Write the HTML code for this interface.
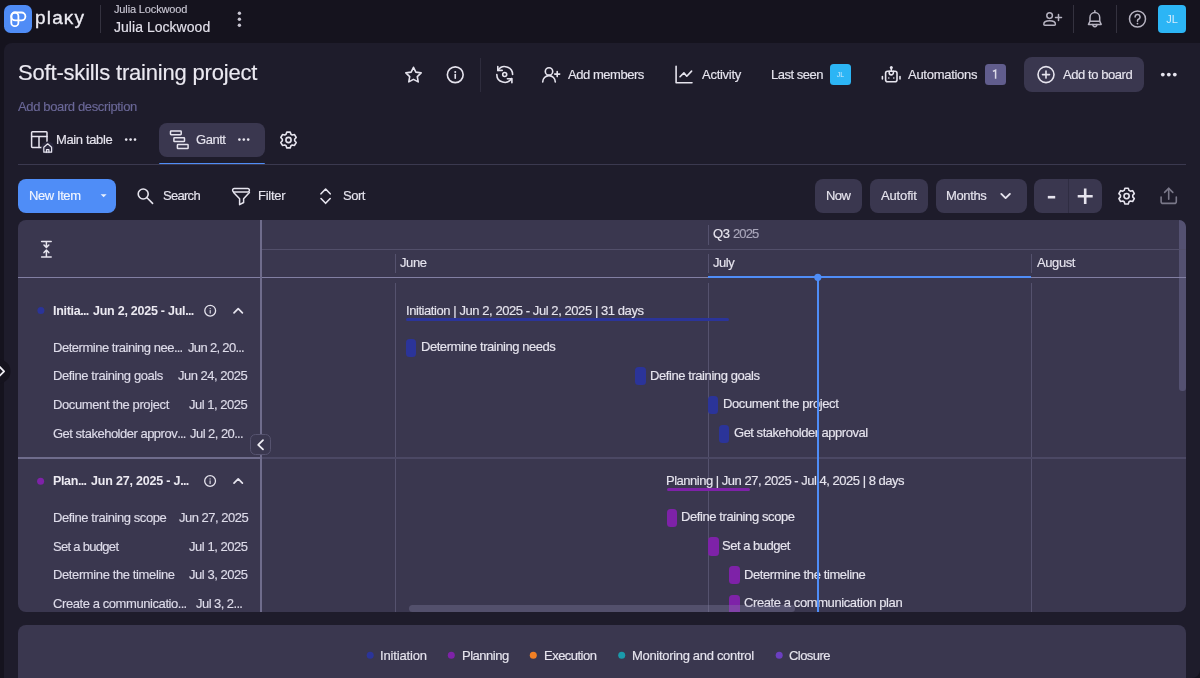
<!DOCTYPE html>
<html><head><meta charset="utf-8"><style>
html,body{margin:0;padding:0;width:1200px;height:678px;overflow:hidden;background:#15131e;}
body{position:relative;font-family:"Liberation Sans",sans-serif;}
div,svg{position:absolute;}
.t{white-space:nowrap;will-change:transform;-webkit-text-stroke:0.15px currentColor;}
</style></head><body>
<div style="left:0px;top:0px;width:1200px;height:678px;background:#15131e;border-radius:0px;"></div>
<div style="left:4.4px;top:5.1px;width:27.7px;height:27.7px;background:#4f8cf6;border-radius:6.5px;"></div>
<div class="t" style="left:35.10px;top:7.00px;font-size:19px;line-height:21px;color:#ecebf2;font-weight:400;letter-spacing:1.169px;-webkit-text-stroke:0.35px #ecebf2;">plaκy</div>
<div style="left:100px;top:5px;width:1px;height:28px;background:#34323f;border-radius:0px;"></div>
<div class="t" style="left:114.25px;top:3.00px;font-size:11px;line-height:12px;color:#c9c7d3;font-weight:400;letter-spacing:-0.140px;">Julia Lockwood</div>
<div class="t" style="left:114.25px;top:19.00px;font-size:14px;line-height:16px;color:#e2e0ea;font-weight:400;letter-spacing:0.037px;">Julia Lockwood</div>
<div style="left:1073.3px;top:5.3px;width:1px;height:27.4px;background:#34323f;border-radius:0px;"></div>
<div style="left:1116px;top:5.3px;width:1px;height:27.4px;background:#34323f;border-radius:0px;"></div>
<div style="left:1157.9px;top:4.9px;width:28.2px;height:28px;background:#2cb5f5;border-radius:4px;"></div>
<div class="t" style="right:28px;text-align:right;top:13.00px;font-size:11px;line-height:12px;color:#d4ecfc;font-weight:400;width:28.2px;left:1157.9px;text-align:center;-webkit-text-stroke:0;">JL</div>
<div style="left:4px;top:43px;width:1196px;height:635px;background:#1e1c2b;border-radius:8px;border-top-right-radius:0;border-bottom-left-radius:0;"></div>
<div class="t" style="left:18.20px;top:60.00px;font-size:22px;line-height:25px;color:#ebe9f1;font-weight:400;letter-spacing:-0.187px;">Soft-skills training project</div>
<div class="t" style="left:18.40px;top:99.00px;font-size:13px;line-height:15px;color:#6a6797;font-weight:400;letter-spacing:-0.361px;">Add board description</div>
<div style="left:480px;top:57.6px;width:1px;height:34px;background:#2e2c3d;border-radius:0px;"></div>
<div class="t" style="left:567.80px;top:67.00px;font-size:13px;line-height:15px;color:#e6e4ee;font-weight:400;letter-spacing:-0.457px;">Add members</div>
<div class="t" style="left:701.80px;top:67.00px;font-size:13px;line-height:15px;color:#e6e4ee;font-weight:400;letter-spacing:-0.271px;">Activity</div>
<div class="t" style="left:770.70px;top:67.00px;font-size:13px;line-height:15px;color:#e6e4ee;font-weight:400;letter-spacing:-0.486px;">Last seen</div>
<div style="left:830.1px;top:64.2px;width:20.8px;height:20.8px;background:#2cb5f5;border-radius:3.5px;"></div>
<div class="t" style="left:840.00px;top:71.00px;font-size:7px;line-height:7px;color:#cfeafc;font-weight:400;width:20.8px;left:830.1px;text-align:center;-webkit-text-stroke:0;">JL</div>
<div class="t" style="left:908.25px;top:67.00px;font-size:13px;line-height:15px;color:#e6e4ee;font-weight:400;letter-spacing:-0.274px;">Automations</div>
<div style="left:985px;top:64.2px;width:20.8px;height:20.8px;background:#615d8d;border-radius:3.5px;"></div>
<div style="left:1024.3px;top:57px;width:120px;height:34.8px;background:#3a374f;border-radius:8px;"></div>
<div class="t" style="left:1063.25px;top:67.00px;font-size:13px;line-height:15px;color:#e6e4ee;font-weight:400;letter-spacing:-0.433px;">Add to board</div>
<div class="t" style="left:56.25px;top:132.00px;font-size:13px;line-height:15px;color:#e6e4ee;font-weight:400;letter-spacing:-0.373px;">Main table</div>
<div style="left:158.8px;top:122.6px;width:105.8px;height:34.5px;background:#3a374f;border-radius:8px;"></div>
<div class="t" style="left:196.25px;top:132.00px;font-size:13px;line-height:15px;color:#e6e4ee;font-weight:400;letter-spacing:-0.459px;">Gantt</div>
<div style="left:158.8px;top:162.8px;width:105.8px;height:2px;background:#4f8df7;border-radius:1px;"></div>
<div style="left:18px;top:164px;width:1168px;height:1px;background:#3b394f;border-radius:0px;"></div>
<div style="left:18px;top:178.9px;width:98.1px;height:34.6px;background:#4f8df7;border-radius:8px;"></div>
<div class="t" style="left:28.90px;top:188.00px;font-size:13px;line-height:15px;color:#f1f5fe;font-weight:400;letter-spacing:-0.413px;">New Item</div>
<div class="t" style="left:162.60px;top:188.00px;font-size:13px;line-height:15px;color:#e6e4ee;font-weight:400;letter-spacing:-0.715px;">Search</div>
<div class="t" style="left:258.10px;top:188.00px;font-size:13px;line-height:15px;color:#e6e4ee;font-weight:400;letter-spacing:-0.265px;">Filter</div>
<div class="t" style="left:342.50px;top:188.00px;font-size:13px;line-height:15px;color:#e6e4ee;font-weight:400;letter-spacing:-0.461px;">Sort</div>
<div style="left:815.4px;top:179.1px;width:46.8px;height:34.2px;background:#3a374f;border-radius:8px;"></div>
<div class="t" style="left:826.30px;top:188.00px;font-size:13px;line-height:15px;color:#e6e4ee;font-weight:400;letter-spacing:-0.536px;">Now</div>
<div style="left:870.2px;top:179.1px;width:57.9px;height:34.2px;background:#3a374f;border-radius:8px;"></div>
<div class="t" style="left:880.70px;top:188.00px;font-size:13px;line-height:15px;color:#e6e4ee;font-weight:400;letter-spacing:-0.151px;">Autofit</div>
<div style="left:935.7px;top:179.1px;width:91.2px;height:34.2px;background:#3a374f;border-radius:8px;"></div>
<div class="t" style="left:946.30px;top:188.00px;font-size:13px;line-height:15px;color:#e6e4ee;font-weight:400;letter-spacing:-0.355px;">Months</div>
<div style="left:1034.2px;top:179.1px;width:67.8px;height:34.2px;background:#3a374f;border-radius:8px;"></div>
<div style="left:1068px;top:179.1px;width:1px;height:34.2px;background:#2f2d42;border-radius:0px;"></div>
<div style="left:18px;top:220px;width:1168px;height:392.20000000000005px;background:#3a374f;border-radius:8px;"></div>
<div style="left:1179px;top:220px;width:7px;height:171px;background:#545171;border-radius:3.5px;border-top-left-radius:0;border-top-right-radius:8px;"></div>
<div style="left:262px;top:249px;width:924px;height:1px;background:#524f6a;border-radius:0px;"></div>
<div style="left:18px;top:277px;width:1168px;height:1px;background:#827fa3;border-radius:0px;"></div>
<div style="left:260px;top:220px;width:2px;height:392.20000000000005px;background:#6f6c8c;border-radius:0px;"></div>
<div style="left:708px;top:225px;width:1px;height:19.5px;background:#55526e;border-radius:0px;"></div>
<div class="t" style="left:713.25px;top:226.00px;font-size:13px;line-height:15px;color:#e6e4ee;font-weight:400;letter-spacing:-0.421px;">Q3</div>
<div class="t" style="left:733.00px;top:226.00px;font-size:13px;line-height:15px;color:#a9a6ba;font-weight:400;letter-spacing:-0.905px;">2025</div>
<div style="left:395.0px;top:253.5px;width:1px;height:19.6px;background:#55526e;border-radius:0px;"></div>
<div style="left:707.8px;top:253.5px;width:1px;height:19.6px;background:#55526e;border-radius:0px;"></div>
<div style="left:1030.7px;top:253.5px;width:1px;height:19.6px;background:#55526e;border-radius:0px;"></div>
<div class="t" style="left:400.10px;top:255.00px;font-size:13px;line-height:15px;color:#e6e4ee;font-weight:400;letter-spacing:-0.398px;">June</div>
<div class="t" style="left:713.25px;top:255.00px;font-size:13px;line-height:15px;color:#e6e4ee;font-weight:400;letter-spacing:-0.467px;">July</div>
<div class="t" style="left:1036.50px;top:255.00px;font-size:13px;line-height:15px;color:#e6e4ee;font-weight:400;letter-spacing:-0.412px;">August</div>
<div style="left:395.0px;top:283px;width:1px;height:329.20000000000005px;background:#55526e;border-radius:0px;"></div>
<div style="left:707.8px;top:283px;width:1px;height:329.20000000000005px;background:#55526e;border-radius:0px;"></div>
<div style="left:1030.7px;top:283px;width:1px;height:329.20000000000005px;background:#55526e;border-radius:0px;"></div>
<div style="left:18px;top:457px;width:243px;height:2px;background:#6f6c8c;border-radius:0px;"></div>
<div style="left:262px;top:457px;width:924px;height:2px;background:#4b4864;border-radius:0px;"></div>
<div class="t" style="left:53.10px;top:304.00px;font-size:12.5px;line-height:14px;color:#ebe9f1;font-weight:700;letter-spacing:-0.316px;-webkit-text-stroke:0;">Initia<span style="letter-spacing:-0.764px">...</span></div>
<div class="t" style="left:93.10px;top:304.00px;font-size:12.5px;line-height:14px;color:#ebe9f1;font-weight:700;letter-spacing:-0.253px;-webkit-text-stroke:0;">Jun 2, 2025 - Jul<span style="letter-spacing:-0.764px">...</span></div>
<div class="t" style="left:53.10px;top:340.00px;font-size:13px;line-height:15px;color:#dedcea;font-weight:400;letter-spacing:-0.481px;">Determine training nee<span style="letter-spacing:-0.795px">...</span></div>
<div class="t" style="left:187.70px;top:340.00px;font-size:13px;line-height:15px;color:#dedcea;font-weight:400;letter-spacing:-0.671px;">Jun 2, 20<span style="letter-spacing:-0.795px">...</span></div>
<div class="t" style="left:52.80px;top:368.00px;font-size:13px;line-height:15px;color:#dedcea;font-weight:400;letter-spacing:-0.410px;">Define training goals</div>
<div class="t" style="left:178.40px;top:368.00px;font-size:13px;line-height:15px;color:#dedcea;font-weight:400;letter-spacing:-0.490px;">Jun 24, 2025</div>
<div class="t" style="left:52.80px;top:397.00px;font-size:13px;line-height:15px;color:#dedcea;font-weight:400;letter-spacing:-0.383px;">Document the project</div>
<div class="t" style="left:189.40px;top:397.00px;font-size:13px;line-height:15px;color:#dedcea;font-weight:400;letter-spacing:-0.482px;">Jul 1, 2025</div>
<div class="t" style="left:52.80px;top:426.00px;font-size:13px;line-height:15px;color:#dedcea;font-weight:400;letter-spacing:-0.499px;">Get stakeholder approv<span style="letter-spacing:-0.795px">...</span></div>
<div class="t" style="left:189.80px;top:426.00px;font-size:13px;line-height:15px;color:#dedcea;font-weight:400;letter-spacing:-0.544px;">Jul 2, 20<span style="letter-spacing:-0.795px">...</span></div>
<div class="t" style="left:52.60px;top:474.00px;font-size:12.5px;line-height:14px;color:#ebe9f1;font-weight:700;letter-spacing:-0.356px;-webkit-text-stroke:0;">Plan<span style="letter-spacing:-0.764px">...</span></div>
<div class="t" style="left:91.20px;top:474.00px;font-size:12.5px;line-height:14px;color:#ebe9f1;font-weight:700;letter-spacing:-0.196px;-webkit-text-stroke:0;">Jun 27, 2025 - J<span style="letter-spacing:-0.764px">...</span></div>
<div class="t" style="left:52.80px;top:510.00px;font-size:13px;line-height:15px;color:#dedcea;font-weight:400;letter-spacing:-0.416px;">Define training scope</div>
<div class="t" style="left:178.60px;top:510.00px;font-size:13px;line-height:15px;color:#dedcea;font-weight:400;letter-spacing:-0.490px;">Jun 27, 2025</div>
<div class="t" style="left:52.80px;top:539.00px;font-size:13px;line-height:15px;color:#dedcea;font-weight:400;letter-spacing:-0.702px;">Set a budget</div>
<div class="t" style="left:189.30px;top:539.00px;font-size:13px;line-height:15px;color:#dedcea;font-weight:400;letter-spacing:-0.455px;">Jul 1, 2025</div>
<div class="t" style="left:52.80px;top:567.00px;font-size:13px;line-height:15px;color:#dedcea;font-weight:400;letter-spacing:-0.385px;">Determine the timeline</div>
<div class="t" style="left:189.30px;top:567.00px;font-size:13px;line-height:15px;color:#dedcea;font-weight:400;letter-spacing:-0.455px;">Jul 3, 2025</div>
<div class="t" style="left:52.80px;top:596.00px;font-size:13px;line-height:15px;color:#dedcea;font-weight:400;letter-spacing:-0.420px;">Create a communicatio<span style="letter-spacing:-0.795px">...</span></div>
<div class="t" style="left:196.20px;top:596.00px;font-size:13px;line-height:15px;color:#dedcea;font-weight:400;letter-spacing:-0.545px;">Jul 3, 2<span style="letter-spacing:-0.795px">...</span></div>
<div style="left:250.3px;top:434.4px;width:20.6px;height:20.4px;background:#3a374f;border-radius:5.5px;border:1px solid #56536f;box-sizing:border-box;"></div>
<div class="t" style="left:405.80px;top:303.00px;font-size:13px;line-height:15px;color:#e6e4ee;font-weight:400;letter-spacing:-0.432px;">Initiation | Jun 2, 2025 - Jul 2, 2025 | 31 days</div>
<div style="left:406.2px;top:317.7px;width:322.8px;height:3.4px;background:#2b3499;border-radius:2px;"></div>
<div style="left:406.1px;top:338.5px;width:10.4px;height:18.1px;background:#2b3499;border-radius:3.5px;"></div>
<div class="t" style="left:420.50px;top:339.00px;font-size:13px;line-height:15px;color:#e6e4ee;font-weight:400;letter-spacing:-0.456px;">Determine training needs</div>
<div style="left:635.4px;top:367.2px;width:10.4px;height:18.1px;background:#2b3499;border-radius:3.5px;"></div>
<div class="t" style="left:649.90px;top:368.00px;font-size:13px;line-height:15px;color:#e6e4ee;font-weight:400;letter-spacing:-0.425px;">Define training goals</div>
<div style="left:708.1px;top:395.9px;width:10.4px;height:18.1px;background:#2b3499;border-radius:3.5px;"></div>
<div class="t" style="left:723.10px;top:396.00px;font-size:13px;line-height:15px;color:#e6e4ee;font-weight:400;letter-spacing:-0.408px;">Document the project</div>
<div style="left:718.9px;top:424.5px;width:10.4px;height:18.1px;background:#2b3499;border-radius:3.5px;"></div>
<div class="t" style="left:733.50px;top:425.00px;font-size:13px;line-height:15px;color:#e6e4ee;font-weight:400;letter-spacing:-0.486px;">Get stakeholder approval</div>
<div class="t" style="left:666.00px;top:473.00px;font-size:13px;line-height:15px;color:#e6e4ee;font-weight:400;letter-spacing:-0.486px;">Planning | Jun 27, 2025 - Jul 4, 2025 | 8 days</div>
<div style="left:666.5px;top:487.8px;width:83.2px;height:3.4px;background:#7e22a8;border-radius:2px;"></div>
<div style="left:666.6px;top:508.8px;width:10.5px;height:18.2px;background:#7e22a8;border-radius:3.5px;"></div>
<div class="t" style="left:680.70px;top:509.00px;font-size:13px;line-height:15px;color:#e6e4ee;font-weight:400;letter-spacing:-0.406px;">Define training scope</div>
<div style="left:708.1px;top:537.4px;width:10.5px;height:18.2px;background:#7e22a8;border-radius:3.5px;"></div>
<div class="t" style="left:722.30px;top:538.00px;font-size:13px;line-height:15px;color:#e6e4ee;font-weight:400;letter-spacing:-0.486px;">Set a budget</div>
<div style="left:729.0px;top:566.1px;width:10.5px;height:18.2px;background:#7e22a8;border-radius:3.5px;"></div>
<div class="t" style="left:743.60px;top:567.00px;font-size:13px;line-height:15px;color:#e6e4ee;font-weight:400;letter-spacing:-0.398px;">Determine the timeline</div>
<div style="left:729.0px;top:594.8px;width:10.5px;height:17.40000000000009px;background:#7e22a8;border-radius:3.5px;border-bottom-left-radius:0;border-bottom-right-radius:0;"></div>
<div class="t" style="left:743.60px;top:595.00px;font-size:13px;line-height:15px;color:#e6e4ee;font-weight:400;letter-spacing:-0.403px;">Create a communication plan</div>
<div style="left:708px;top:276px;width:323.3px;height:2px;background:#4f8df7;border-radius:0px;"></div>
<div style="left:817px;top:277.5px;width:2px;height:334.70000000000005px;background:#4f8df7;border-radius:0px;"></div>
<div style="left:408.9px;top:605px;width:386.3px;height:7px;background:rgba(138,135,168,0.33);border-radius:3.5px;"></div>
<div style="left:18px;top:625px;width:1168px;height:60px;background:#3a374f;border-radius:8px;"></div>
<div class="t" style="left:379.90px;top:648.00px;font-size:13px;line-height:15px;color:#e6e4ee;font-weight:400;letter-spacing:-0.152px;">Initiation</div>
<div class="t" style="left:462.00px;top:648.00px;font-size:13px;line-height:15px;color:#e6e4ee;font-weight:400;letter-spacing:-0.487px;">Planning</div>
<div class="t" style="left:544.10px;top:648.00px;font-size:13px;line-height:15px;color:#e6e4ee;font-weight:400;letter-spacing:-0.521px;">Execution</div>
<div class="t" style="left:632.00px;top:648.00px;font-size:13px;line-height:15px;color:#e6e4ee;font-weight:400;letter-spacing:-0.315px;">Monitoring and control</div>
<div class="t" style="left:789.10px;top:648.00px;font-size:13px;line-height:15px;color:#e6e4ee;font-weight:400;letter-spacing:-0.571px;">Closure</div>
<svg style="left:0;top:0" width="1200" height="678" viewBox="0 0 1200 678"><g fill="none" stroke-linecap="round" stroke-linejoin="round" stroke="#fff" stroke-width="1.8"><rect x="11.3" y="12.5" width="7.1" height="13.7" rx="3.55"/><rect x="11.3" y="12.5" width="14.1" height="7.9" rx="3.95"/></g><circle cx="239.4" cy="13.2" r="1.7" fill="#c8c6d2"/><circle cx="239.4" cy="19.2" r="1.7" fill="#c8c6d2"/><circle cx="239.4" cy="25.2" r="1.7" fill="#c8c6d2"/><g fill="none" stroke-linecap="round" stroke-linejoin="round" stroke="#b6b3c1" stroke-width="1.5"><circle cx="1049.6" cy="15.6" r="2.8"/><path d="M1043.8 24.2c0-2.3 2.6-3.4 5.8-3.4s5.8 1.1 5.8 3.4a1 1 0 0 1-1 1h-9.6a1 1 0 0 1-1-1z"/><path d="M1058.5 14.4v6M1055.5 17.4h6"/></g><g fill="none" stroke-linecap="round" stroke-linejoin="round" stroke="#b6b3c1" stroke-width="1.5"><path d="M1090 21.2v-3.8a4.85 4.85 0 0 1 9.7 0v3.8"/><path d="M1090 21.2h9.7l1.5 3.2h-12.7z"/><path d="M1092.8 24.6a2.05 2.05 0 0 0 4.1 0"/><path d="M1094.85 10.7v1.5"/></g><g fill="none" stroke-linecap="round" stroke-linejoin="round" stroke="#b6b3c1" stroke-width="1.5"><circle cx="1137.5" cy="19" r="8"/><path d="M1135.1 16.9a2.45 2.45 0 1 1 3.4 2.3c-.7.3-1 .8-1 1.5v.6"/></g><circle cx="1137.5" cy="23.6" r="0.9" fill="#b6b3c1"/><g fill="none" stroke-linecap="round" stroke-linejoin="round" stroke="#e6e4ee" stroke-width="1.6"><path d="M413.5 67.3l2.35 4.85 5.3.75-3.85 3.7.9 5.3-4.7-2.5-4.7 2.5.9-5.3-3.85-3.7 5.3-.75z"/></g><g fill="none" stroke-linecap="round" stroke-linejoin="round" stroke="#e6e4ee" stroke-width="1.6"><circle cx="455.25" cy="74.75" r="7.9"/><path d="M455.25 74.6v3.6"/></g><circle cx="455.25" cy="71.9" r="1" fill="#e6e4ee"/><g fill="none" stroke-linecap="round" stroke-linejoin="round" stroke="#e6e4ee" stroke-width="1.6"><path d="M497.9 70.5A7.9 7.9 0 0 1 512.6 74.5"/><path d="M497.8 66.5V70.4H502.2"/><path d="M496.8 74.5A7.9 7.9 0 0 0 511.5 78.5"/><path d="M507.4 78.7H511.9V82.8"/><circle cx="504.7" cy="74.5" r="2"/></g><g fill="none" stroke-linecap="round" stroke-linejoin="round" stroke="#e6e4ee" stroke-width="1.6"><circle cx="549" cy="71.4" r="3.7"/><path d="M542.7 81.9a6.3 6.3 0 0 1 12.6 0"/><path d="M557.2 71.6v5M554.7 74.1h5"/></g><g fill="none" stroke-linecap="round" stroke-linejoin="round" stroke="#e6e4ee" stroke-width="1.6"><path d="M676.1 66.3v16.4h15.9"/><path d="M680 76.8l3.9-3.9 2.9 3.3 4.8-5.1"/></g><g fill="none" stroke-linecap="round" stroke-linejoin="round" stroke="#e6e4ee" stroke-width="1.6"><rect x="885.6" y="71.2" width="11.4" height="10.6" rx="2"/><path d="M889.2 71.4v1.4a2.1 2.1 0 0 0 4.2 0v-1.4"/><path d="M891.3 71v-2.6"/><path d="M882.4 76.6v2.4M900 76.6v2.4"/></g><circle cx="891.3" cy="67.5" r="1.5" fill="#e6e4ee"/><circle cx="888.8" cy="78" r=".8" fill="#e6e4ee"/><circle cx="893.8" cy="78" r=".8" fill="#e6e4ee"/><path d="M995.6 78.8V70.2L992.9 71.4" fill="none" stroke="#dddbe8" stroke-width="1.5" stroke-linejoin="miter" stroke-linecap="butt"/><g fill="none" stroke-linecap="round" stroke-linejoin="round" stroke="#e6e4ee" stroke-width="1.6"><circle cx="1046" cy="74.6" r="8"/><path d="M1046 71.1v7M1042.5 74.6h7"/></g><circle cx="1162.8" cy="74.6" r="1.9" fill="#e6e4ee"/><circle cx="1168.8" cy="74.6" r="1.9" fill="#e6e4ee"/><circle cx="1174.8" cy="74.6" r="1.9" fill="#e6e4ee"/><g fill="none" stroke-linecap="round" stroke-linejoin="round" stroke="#e6e4ee" stroke-width="1.5"><rect x="31.6" y="131.8" width="15.4" height="15.6" rx="0.8"/><path d="M31.6 136.6h15.4M39 136.6v11"/></g><circle cx="47.7" cy="147.8" r="6.4" fill="#2a283d"/><g fill="none" stroke-linecap="round" stroke-linejoin="round" stroke="#e6e4ee" stroke-width="1.2"><path d="M43.8 152.2v-5l3.9-3.4 3.9 3.4v5z"/><path d="M46.5 152.2v-2.6h2.4v2.6"/></g><circle cx="126.2" cy="139.6" r="1.3" fill="#e6e4ee"/><circle cx="130.6" cy="139.6" r="1.3" fill="#e6e4ee"/><circle cx="135" cy="139.6" r="1.3" fill="#e6e4ee"/><g fill="none" stroke-linecap="round" stroke-linejoin="round" stroke="#e6e4ee" stroke-width="1.5"><rect x="170.5" y="130.9" width="10.7" height="3.8" rx="0.6"/><rect x="173.9" y="137.8" width="10.6" height="3.8" rx="0.6"/><rect x="177.4" y="144.6" width="10.7" height="3.9" rx="0.6"/></g><circle cx="239.4" cy="139.6" r="1.3" fill="#e6e4ee"/><circle cx="243.8" cy="139.6" r="1.3" fill="#e6e4ee"/><circle cx="248.2" cy="139.6" r="1.3" fill="#e6e4ee"/><g fill="none" stroke-linecap="round" stroke-linejoin="round" stroke="#e6e4ee" stroke-width="1.6"><path d="M286.82 132.08L290.18 132.08L290.92 134.29L292.23 135.05L294.52 134.58L296.20 137.50L294.65 139.24L294.65 140.76L296.20 142.50L294.52 145.42L292.23 144.95L290.92 145.71L290.18 147.92L286.82 147.92L286.08 145.71L284.77 144.95L282.48 145.42L280.80 142.50L282.35 140.76L282.35 139.24L280.80 137.50L282.48 134.58L284.77 135.05L286.08 134.29Z"/><circle cx="288.5" cy="140" r="2.6"/></g><path d="M100.6 194.2h6l-3 3z" fill="#e9f0fd"/><g fill="none" stroke-linecap="round" stroke-linejoin="round" stroke="#e6e4ee" stroke-width="1.6"><circle cx="143.2" cy="194" r="5"/><path d="M147 197.8l5.6 5.6"/></g><g fill="none" stroke-linecap="round" stroke-linejoin="round" stroke="#e6e4ee" stroke-width="1.5"><path d="M234.2 188.6h13.6a1.6 1.6 0 0 1 1.6 1.6v.1a1.6 1.6 0 0 1-1.6 1.6h-13.6a1.6 1.6 0 0 1-1.6-1.6v-.1a1.6 1.6 0 0 1 1.6-1.6z"/><path d="M233.6 192.4l6 6.3v6l4-2.2v-3.8l5.8-6.3"/></g><g fill="none" stroke-linecap="round" stroke-linejoin="round" stroke="#e6e4ee" stroke-width="1.6"><path d="M321 193.8l4.6-4.8 4.6 4.8M321 198.5l4.6 4.8 4.6-4.8"/></g><g fill="none" stroke-linecap="round" stroke-linejoin="round" stroke="#e6e4ee" stroke-width="1.9"><path d="M1001.3 193.9l4.3 4.2 4.3-4.2"/></g><g stroke="#e6e4ee" stroke-width="2.6" stroke-linecap="butt"><path d="M1047.8 197.2h7.4"/><path d="M1077.7 196.3h15M1085.2 188.6v15.3"/></g><g fill="none" stroke-linecap="round" stroke-linejoin="round" stroke="#e6e4ee" stroke-width="1.6"><path d="M1124.92 188.18L1128.28 188.18L1129.02 190.39L1130.33 191.15L1132.62 190.68L1134.30 193.60L1132.75 195.34L1132.75 196.86L1134.30 198.60L1132.62 201.52L1130.33 201.05L1129.02 201.81L1128.28 204.02L1124.92 204.02L1124.18 201.81L1122.87 201.05L1120.58 201.52L1118.90 198.60L1120.45 196.86L1120.45 195.34L1118.90 193.60L1120.58 190.68L1122.87 191.15L1124.18 190.39Z"/><circle cx="1126.6" cy="196.1" r="2.6"/></g><g fill="none" stroke-linecap="round" stroke-linejoin="round" stroke="#7a7889" stroke-width="1.6"><path d="M1168.7 188.4v10.8"/><path d="M1164.6 192.4l4.1-4 4.1 4"/><path d="M1161.1 197v4.4a2 2 0 0 0 2 2h11.2a2 2 0 0 0 2-2v-4.4"/></g><g fill="none" stroke-linecap="round" stroke-linejoin="round" stroke="#e6e4ee" stroke-width="1.5"><path d="M41.6 241.4h9.6M46.4 242v5.4M44 245.1l2.4 2.5 2.4-2.5M41.6 257h9.6M46.4 256.4v-6.2M44 252.6l2.4-2.5 2.4 2.5"/></g><circle cx="40.9" cy="310.6" r="3.5" fill="#2b3499"/><g fill="none" stroke-linecap="round" stroke-linejoin="round" stroke="#e6e4ee" stroke-width="1.3"><circle cx="210.2" cy="310.7" r="5.4"/></g><path d="M210.2 310.5v2.6" stroke="#e6e4ee" stroke-width="1.1" stroke-linecap="round"/><circle cx="210.2" cy="308.6" r=".65" fill="#e6e4ee"/><g fill="none" stroke-linecap="round" stroke-linejoin="round" stroke="#e6e4ee" stroke-width="1.7"><path d="M234 312.8l4.2-4.2 4.2 4.2"/></g><circle cx="40.6" cy="481.2" r="3.5" fill="#7e22a8"/><g fill="none" stroke-linecap="round" stroke-linejoin="round" stroke="#e6e4ee" stroke-width="1.3"><circle cx="210.1" cy="481" r="5.4"/></g><path d="M210.1 480.8v2.6" stroke="#e6e4ee" stroke-width="1.1" stroke-linecap="round"/><circle cx="210.1" cy="478.9" r=".65" fill="#e6e4ee"/><g fill="none" stroke-linecap="round" stroke-linejoin="round" stroke="#e6e4ee" stroke-width="1.7"><path d="M234 483.1l4.2-4.2 4.2 4.2"/></g><g fill="none" stroke-linecap="round" stroke-linejoin="round" stroke="#f0eff5" stroke-width="1.8"><path d="M263 440.2l-4.8 4.6 4.8 4.6"/></g><circle cx="817.8" cy="277.3" r="3.6" fill="#4f8df7"/><circle cx="-1.6" cy="371.4" r="12.1" fill="#15131e"/><g fill="none" stroke-linecap="round" stroke-linejoin="round" stroke="#f0eff5" stroke-width="1.8"><path d="M-0.2 367l4.3 4.3-4.3 4.3"/></g><circle cx="370.2" cy="655.3" r="3.5" fill="#2b3499"/><circle cx="451.3" cy="655.3" r="3.5" fill="#7e22a8"/><circle cx="533.3" cy="655.3" r="3.5" fill="#f28024"/><circle cx="621.7" cy="655.3" r="3.5" fill="#1a9aab"/><circle cx="779.2" cy="655.3" r="3.5" fill="#6b3fc0"/></svg>
</body></html>
